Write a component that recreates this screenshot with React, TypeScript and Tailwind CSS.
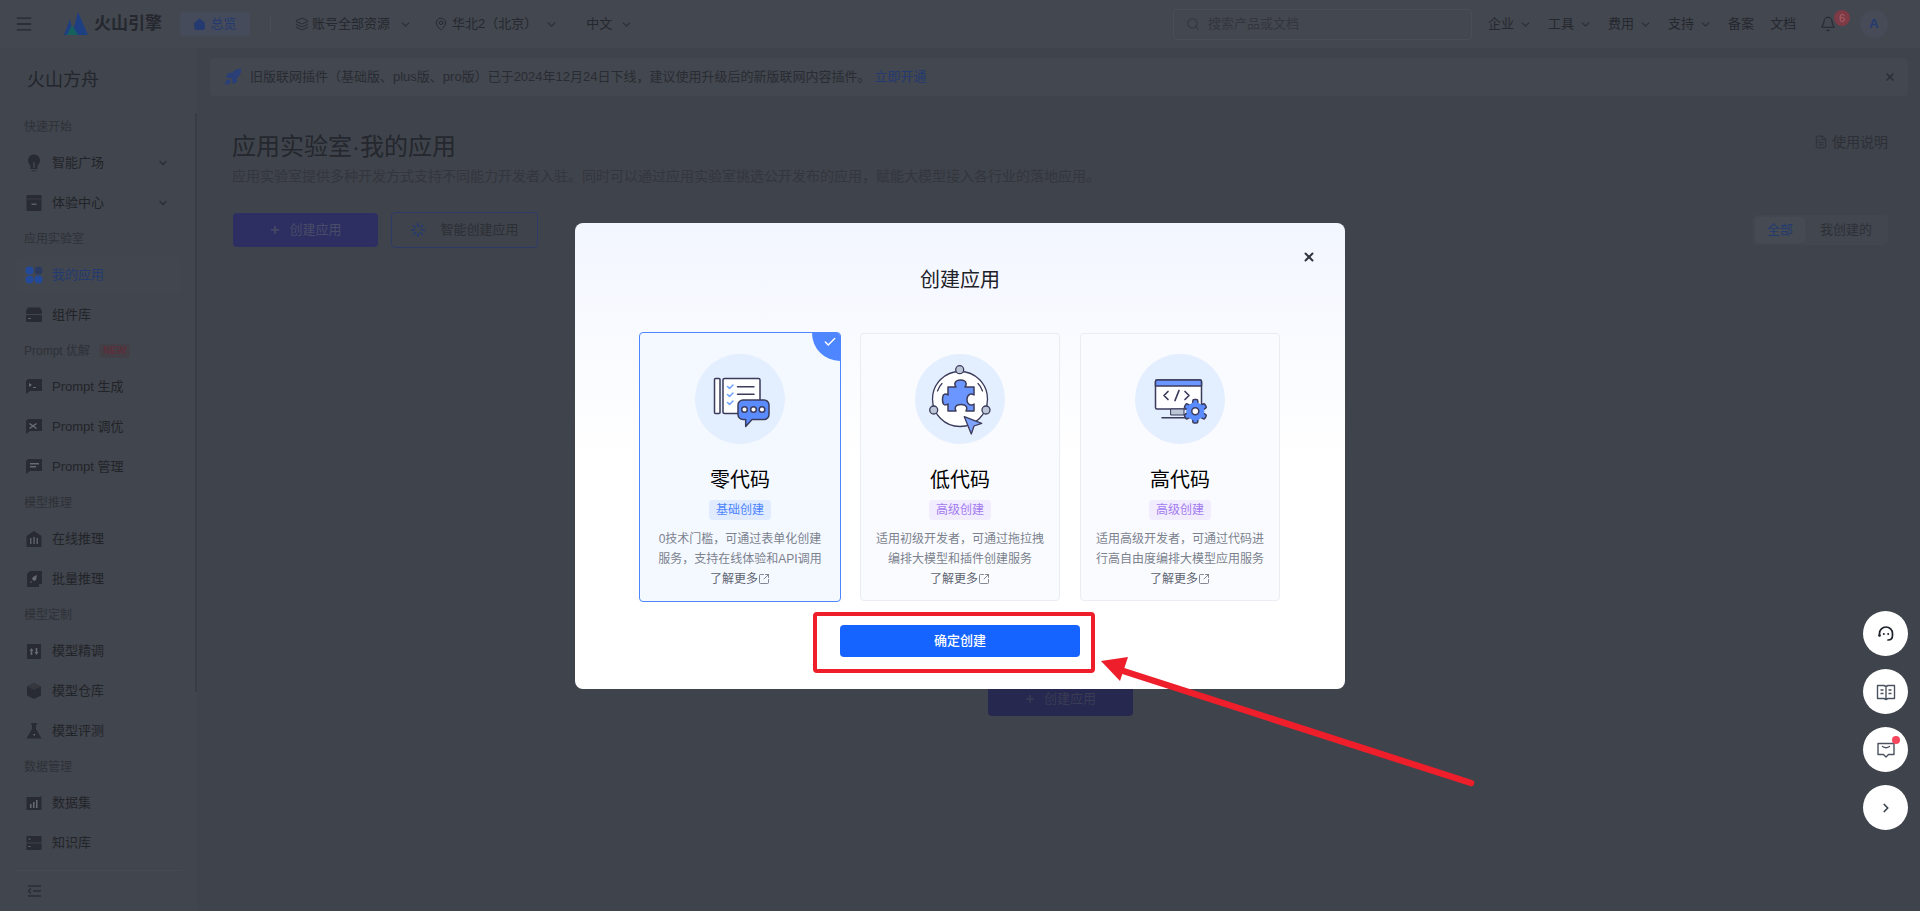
import {
  Bell,
  Check,
  ChevronDown,
  ChevronRight,
  FileText,
  House,
  Layers,
  MapPin,
  Menu,
  Plus,
  Rocket,
  Search,
  SquareArrowOutUpRight,
  X,
} from "lucide-react"
import type { ReactNode } from "react"

const fontStack = { fontFamily: '"Liberation Sans", "Noto Sans CJK SC", sans-serif' }

const Glyph = ({ children, color = "#282b33" }: { children: ReactNode; color?: string }) => (
  <svg width="20" height="20" viewBox="0 0 20 20" fill={color}>
    {children}
  </svg>
)

const sideIcons: Record<string, ReactNode> = {
  bulb: (
    <Glyph>
      <path d="M10 1.500c-3.600 0-6 2.700-6 6 0 2.400 1.200 3.900 2.500 5.200V16h7v-3.300C14.800 11.400 16 9.900 16 7.500c0-3.300-2.400-6-6-6z" />
      <path d="M9.200 9h1.600v6H9.200z" fill="#41454d" />
      <path d="M7.500 17h5v1.500h-5z" fill="#33363d" />
    </Glyph>
  ),
  box: (
    <Glyph>
      <rect x="2.500" y="2" width="15" height="16" rx="1" />
      <path d="M7.500 10.500h5V12h-5z" fill="#5a5e66" />
      <path d="M2.500 5.500h15v1h-15z" fill="#3a3d45" />
    </Glyph>
  ),
  apps: (
    <Glyph color="#234a9a">
      <circle cx="5.500" cy="5.500" r="4" />
      <circle cx="14.500" cy="5.500" r="4" fill="#2b3a60" />
      <circle cx="5.500" cy="14.500" r="4" />
      <circle cx="14.500" cy="14.500" r="4" />
    </Glyph>
  ),
  stack: (
    <Glyph>
      <path d="M4 2.500h12l2 3.500v3H2V6z" />
      <rect x="2" y="10" width="16" height="7" rx="1" />
      <path d="M4 13h3v1H4z" fill="#5a5e66" />
    </Glyph>
  ),
  term: (
    <Glyph>
      <path d="M4 2h14v12H6l-4 3V4z" />
      <path d="M5 6l3 2-3 2zM9 10h3v1H9z" fill="#666a72" />
    </Glyph>
  ),
  tune: (
    <Glyph>
      <path d="M4 2h14v12H6l-4 3V4z" />
      <path d="M6 6l7 5-1 1-7-5zM12 6l1 1-7 5-1-1z" fill="#666a72" />
    </Glyph>
  ),
  lines: (
    <Glyph>
      <path d="M4 2h14v12H6l-4 3V4z" />
      <path d="M6 6h9v1.500H6zM6 9h6v1.500H6z" fill="#666a72" />
    </Glyph>
  ),
  bank: (
    <Glyph>
      <path d="M2.500 7L10 2l7.500 5v11h-15z" />
      <path d="M6 9h1.500v6H6zM9.300 8h1.500v7H9.300zM12.500 9H14v6h-1.500z" fill="#5a5e66" />
    </Glyph>
  ),
  batch: (
    <Glyph>
      <path d="M6 2h12v13h-3v3H3V5l3-3z" />
      <path d="M13 6l-1 5-2 1-2-2 1-2zM7 12l1 1-2 1z" fill="#666a72" />
    </Glyph>
  ),
  updown: (
    <Glyph>
      <rect x="3" y="3" width="14" height="15" />
      <path d="M7.500 7l2 3H8.300v4H6.700v-4H5.500zM12.500 14l-2-3h1.200V7h1.600v4h1.200z" fill="#666a72" />
    </Glyph>
  ),
  cube: (
    <Glyph>
      <path d="M10 2l7 3.500v9L10 18l-7-3.500v-9z" />
      <path d="M10 2l7 3.500L10 9 3 5.500z" fill="#34373e" />
    </Glyph>
  ),
  flask: (
    <Glyph>
      <path d="M7 2h6v1.500h-1V8l5.500 9.500H2.500L8 8V3.500H7z" />
      <rect x="9.500" y="13" width="1.500" height="1.500" fill="#666a72" />
    </Glyph>
  ),
  bars: (
    <Glyph>
      <path d="M2.500 4h13l2-1v14H2.500z" />
      <path d="M6 11h1.500v4H6zM9 9h1.500v6H9zM12 7h1.500v8H12z" fill="#666a72" />
    </Glyph>
  ),
  server: (
    <Glyph>
      <rect x="2.500" y="3" width="15" height="6.500" />
      <rect x="2.500" y="10.500" width="15" height="6.500" />
      <path d="M4.500 5.500h2v1h-2zM4.500 13h2v1h-2z" fill="#666a72" />
    </Glyph>
  ),
}

type NavEntry =
  | { title: string; badge?: string }
  | { label: string; icon: string; caret?: boolean; active?: boolean }

const navEntries: NavEntry[] = [
  { title: "快速开始" },
  { label: "智能广场", icon: "bulb", caret: true },
  { label: "体验中心", icon: "box", caret: true },
  { title: "应用实验室" },
  { label: "我的应用", icon: "apps", active: true },
  { label: "组件库", icon: "stack" },
  { title: "Prompt 优解", badge: "NEW" },
  { label: "Prompt 生成", icon: "term" },
  { label: "Prompt 调优", icon: "tune" },
  { label: "Prompt 管理", icon: "lines" },
  { title: "模型推理" },
  { label: "在线推理", icon: "bank" },
  { label: "批量推理", icon: "batch" },
  { title: "模型定制" },
  { label: "模型精调", icon: "updown" },
  { label: "模型仓库", icon: "cube" },
  { label: "模型评测", icon: "flask" },
  { title: "数据管理" },
  { label: "数据集", icon: "bars" },
  { label: "知识库", icon: "server" },
]

const Sidebar = () => (
  <aside className="w-[197px] shrink-0 flex flex-col bg-[#41454d] relative">
    <div className="h-[63px] pl-[27px] pt-[19px] text-[18px] leading-[26px] text-[#23262c]">火山方舟</div>
    <nav>
      {navEntries.map((entry) =>
        "title" in entry ? (
          <div key={entry.title} className="h-8 pl-6 flex items-center text-xs text-[#2e3138]">
            {entry.title}
            {entry.badge && (
              <span className="ml-[9px] px-1 rounded-sm bg-[#433f47] text-[10px] font-bold text-[#5c2f3a]">
                {entry.badge}
              </span>
            )}
          </div>
        ) : (
          <div key={entry.label} className="h-10 py-0.5 mx-4">
            <div
              className={`h-9 pl-2 pr-3 rounded flex items-center text-[13px] ${
                entry.active ? "bg-[#42474f] text-[#243a70]" : "text-[#212429]"
              }`}
            >
              <span className="w-5 mr-2 flex justify-center">{sideIcons[entry.icon]}</span>
              {entry.label}
              {entry.caret && <ChevronDown size={12} strokeWidth={2.5} className="ml-auto text-[#2a2d33]" />}
            </div>
          </div>
        )
      )}
    </nav>
    <div className="mt-[7px] mx-[14px] border-t border-[#464a52] pt-[12px] pl-[12px]">
      <svg width="16" height="16" viewBox="0 0 16 16" fill="none" stroke="#2a2d33" strokeWidth="1.400">
        <path d="M2 3h13M7 8h8M2 13h13M5 5.500L2.500 8 5 10.500" />
      </svg>
    </div>
    <div className="absolute right-0 top-[65px] h-[579px] w-0.5 bg-[#393c44]" />
  </aside>
)

const Caret = () => <ChevronDown size={13} strokeWidth={2.2} className="text-[#2c2f36]" />

const TopNavItem = ({ label }: { label: string }) => (
  <div className="w-[60px] flex items-center gap-[5px]">
    {label}
    <Caret />
  </div>
)

const Header = () => (
  <header className="h-12 shrink-0 flex items-center bg-[#43474f] text-[13px] text-[#25282e]">
    <Menu size={20} strokeWidth={1.600} className="ml-[14px] text-[#25282e]" />
    <svg className="ml-[30px]" width="24" height="26" viewBox="0 0 24 26">
      <path d="M0 24L6 8l3 16z" fill="#1f3f83" />
      <path d="M8 24L14 1l10 23z" fill="#1f3f83" />
      <path d="M3 24l5-10 6 10z" fill="#15615e" />
    </svg>
    <span className="ml-1.5 text-[17px] font-bold text-[#25282e]">火山引擎</span>
    <div className="ml-[18px] w-[70px] h-6 rounded bg-[#454b5a] flex items-center justify-center gap-1 text-[#243a70]">
      <House size={13} fill="#243a70" strokeWidth={1.500} />
      总览
    </div>
    <div className="ml-5 w-px h-4 bg-[#484c54]" />
    <div className="ml-[24px] flex items-center gap-[3px]">
      <Layers size={14} strokeWidth={1.600} />
      账号全部资源
      <span className="ml-1.5">
        <Caret />
      </span>
    </div>
    <div className="ml-[22px] flex items-center gap-1">
      <MapPin size={14} strokeWidth={1.600} />
      华北2（北京）
      <span className="ml-1">
        <Caret />
      </span>
    </div>
    <div className="ml-[28px] flex items-center gap-2">
      中文
      <Caret />
    </div>
    <div className="ml-auto flex items-center pr-8">
      <div className="w-[299px] h-[31px] rounded border border-[#4a4e56] flex items-center pl-[12px] gap-2 text-[#33363d]">
        <Search size={14} strokeWidth={1.800} />
        搜索产品或文档
      </div>
      <div className="ml-4 flex items-center">
        <TopNavItem label="企业" />
        <TopNavItem label="工具" />
        <TopNavItem label="费用" />
        <TopNavItem label="支持" />
        <span className="w-[42px]">备案</span>
        <span className="w-[26px]">文档</span>
      </div>
      <div className="relative ml-6">
        <Bell size={16} strokeWidth={1.600} />
        <span className="absolute -top-[6px] left-[14px] w-4 h-4 rounded-full bg-[#7e3a45] text-[11px] leading-4 text-center text-[#a9606a]">
          6
        </span>
      </div>
      <div className="ml-6 w-7 h-7 rounded-full bg-[#464b57] flex items-center justify-center font-bold text-[#243a70]">
        A
      </div>
    </div>
  </header>
)

const MainContent = () => (
  <main className="flex-1 min-w-0 flex flex-col bg-[#3f434b]">
    <div className="mt-2.5 ml-[13px] mr-3 h-[38px] rounded bg-[#43474f] flex items-center pl-3.5 pr-3 text-[13px] text-[#292c32]">
      <Rocket size={18} fill="#2b3f78" stroke="#2b3f78" />
      <span className="ml-[8px]">
        旧版联网插件（基础版、plus版、pro版）已于2024年12月24日下线，建议使用升级后的新版联网内容插件。
      </span>
      <span className="ml-1 text-[#243a70]">立即开通</span>
      <X size={12} strokeWidth={3} className="ml-auto text-[#2b2e35]" />
    </div>
    <div className="pl-[35px] pr-8 pt-[35px] flex flex-col">
      <div className="flex items-start justify-between">
        <h1 className="text-2xl leading-8 text-[#24272d]">应用实验室·我的应用</h1>
        <div className="flex items-center gap-1 text-sm text-[#2d3036] h-[22px]">
          <FileText size={14} strokeWidth={1.600} />
          使用说明
        </div>
      </div>
      <p className="mt-0.5 text-sm leading-[22px] text-[#33363d]">
        应用实验室提供多种开发方式支持不同能力开发者入驻。同时可以通过应用实验室挑选公开发布的应用，赋能大模型接入各行业的落地应用。
      </p>
      <div className="mt-[25px] pl-px flex items-center">
        <button className="w-[145px] h-[34px] rounded bg-[#2d2f63] flex items-center justify-center gap-2 text-[13px] text-[#484c66]">
          <Plus size={12} strokeWidth={3} />
          创建应用
        </button>
        <button className="ml-[13px] w-[147px] h-9 rounded border border-[#2d3a68] flex items-center justify-center gap-3.5 text-[13px] text-[#2c2f36]">
          <svg width="16" height="16" viewBox="0 0 16 16" fill="none" stroke="#243a70" strokeWidth="1.600" strokeLinecap="round">
            <path d="M8 1.500v3M8 11.500v3M1.500 8h3M11.500 8h3M3.500 3.500l2 2M10.500 10.500l2 2M12.500 3.500l-2 2M5.500 10.500l-2 2" />
          </svg>
          智能创建应用
        </button>
        <div className="ml-auto w-[135px] h-[30px] rounded bg-[#42464e] flex items-center p-0.5 text-[13px]">
          <span className="w-[50px] h-[26px] rounded-sm bg-[#464a52] flex items-center justify-center text-[#233a6e]">
            全部
          </span>
          <span className="ml-[15px] text-[#2d3036]">我创建的</span>
        </div>
      </div>
      <button className="mx-auto mt-[434px] w-[145px] h-[34px] rounded bg-[#262850] flex items-center justify-center gap-2 text-[13px] text-[#3a3c54]">
        <Plus size={12} strokeWidth={3} />
        创建应用
      </button>
    </div>
  </main>
)

const ink = "#3b3b5c"

const NoCodeArt = () => (
  <svg viewBox="0 0 90 90" className="w-full h-full" fill="none" stroke={ink} strokeWidth="1.500" strokeLinejoin="round" strokeLinecap="round">
    <rect x="19.500" y="24.500" width="5.500" height="35" rx="1" fill="#fff" />
    <rect x="28" y="24.500" width="37" height="35" rx="1.500" fill="#fff" />
    <path d="M32.500 32.500l2 2 3.500-3.500M32.500 40.500l2 2 3.500-3.500M32.500 48.500l2 2 3.500-3.500" stroke="#6ea0ff" />
    <path d="M42.500 32.700H59M42.500 40.300H59" />
    <path d="M48 46h21a5 5 0 0 1 5 5v9.500a5 5 0 0 1-5 5H57l-6.300 7v-7H48a5 5 0 0 1-5-5V51a5 5 0 0 1 5-5z" fill="#5b8cff" />
    <circle cx="49.500" cy="55.500" r="2.800" fill="#fff" />
    <circle cx="58.500" cy="55.500" r="2.800" fill="#fff" />
    <circle cx="67" cy="55.500" r="2.800" fill="#fff" />
  </svg>
)

const LowCodeArt = () => (
  <svg viewBox="0 0 90 90" className="w-full h-full" fill="none" stroke={ink} strokeWidth="1.300" strokeLinejoin="round" strokeLinecap="round">
    <circle cx="45" cy="45" r="27.500" fill="#fff" />
    <path d="M22.500 37c1-3 2.500-5.500 4.500-7.500M67.500 37c-1-3-2.500-5.500-4.500-7.500" />
    <circle cx="44.700" cy="15.700" r="4" fill="#bcc6d6" />
    <circle cx="18.700" cy="56" r="4" fill="#bcc6d6" />
    <circle cx="71" cy="56" r="4" fill="#bcc6d6" />
    <path
      d="M33 33H41c-1-1.500-1.500-2.500-1-4 .7-2 3-3 5.500-3s5 1 5.500 3c.5 1.500 0 2.500-1 4H59V41c-1.500-1-3-1.300-4-.8-2 .8-3 3-3 5.300s1 4.500 3 5.300c1 .5 2.500.2 4-.8V57H51c.8-1.500 1-2.800.5-4-.7-1.600-3.300-2.500-5.500-2.500s-4.800.9-5.500 2.500c-.5 1.200-.3 2.500.5 4H33V50c-1.500 1-3 1.200-4 .5-1.200-.9-1.500-2.800-1.500-5s.3-4.100 1.500-5c1-.7 2.500-.5 4 .5z"
      fill="#6c96ff"
      strokeWidth="1.500"
    />
    <path d="M49.300 62.700L66.700 69.300 59 72 56.300 80z" fill="#7fa4ff" />
  </svg>
)

const HighCodeArt = () => (
  <svg viewBox="0 0 90 90" className="w-full h-full" fill="none" stroke={ink} strokeWidth="1.500" strokeLinejoin="round" strokeLinecap="round">
    <rect x="20.500" y="26" width="46" height="29" rx="1.500" fill="#fff" />
    <path d="M20.500 27.500a1.500 1.500 0 0 1 1.500-1.500h43a1.500 1.500 0 0 1 1.500 1.500V32h-46z" fill="#6c96ff" />
    <path d="M33 37.500l-4 4 4 4M40 46.500l4-10M50 37.500l4 4-4 4" strokeWidth="1.700" />
    <path d="M36 55h13v6H36z" fill="#bcc6d6" strokeWidth="1" />
    <path d="M27 63.700h25" />
    <g fill="#5b8cff">
      <rect x="57.800" y="45.500" width="5" height="23.500" rx="1.500" />
      <rect x="57.800" y="45.500" width="5" height="23.500" rx="1.500" transform="rotate(60 60.300 57.300)" />
      <rect x="57.800" y="45.500" width="5" height="23.500" rx="1.500" transform="rotate(120 60.300 57.300)" />
      <circle cx="60.300" cy="57.300" r="9" stroke="none" />
    </g>
    <circle cx="60.300" cy="57.300" r="3.500" fill="#fff" />
  </svg>
)

interface Plan {
  name: string
  tag: string
  basic?: boolean
  art: ReactNode
  lines: string[]
}

const plans: Plan[] = [
  {
    name: "零代码",
    tag: "基础创建",
    basic: true,
    art: <NoCodeArt />,
    lines: ["0技术门槛，可通过表单化创建", "服务，支持在线体验和API调用"],
  },
  {
    name: "低代码",
    tag: "高级创建",
    art: <LowCodeArt />,
    lines: ["适用初级开发者，可通过拖拉拽", "编排大模型和插件创建服务"],
  },
  {
    name: "高代码",
    tag: "高级创建",
    art: <HighCodeArt />,
    lines: ["适用高级开发者，可通过代码进", "行高自由度编排大模型应用服务"],
  },
]

const PlanCard = ({ plan }: { plan: Plan }) => (
  <div
    className={`relative overflow-hidden rounded border flex flex-col items-center ${
      plan.basic ? "-m-px pt-[21px] border-[#4d86ff] bg-[#f4f8ff]" : "pt-5 border-[#e9edf3] bg-[#fafbfe]"
    }`}
  >
    {plan.basic && (
      <div className="absolute -top-7 -right-7 w-14 h-14 rounded-full bg-[#4d86ff]">
        <Check size={14} strokeWidth={2.5} className="absolute left-[11px] top-[30px] text-white" />
      </div>
    )}
    <div className="w-[90px] h-[90px] rounded-full bg-[#e3eeff]">{plan.art}</div>
    <div className="mt-[22px] text-xl leading-7 text-black">{plan.name}</div>
    <div
      className={`mt-1.5 w-[62px] h-5 rounded text-xs leading-5 text-center ${
        plan.basic ? "bg-[#e0ebff] text-[#4d85ff]" : "bg-[#f2ecff] text-[#a27bf0]"
      }`}
    >
      {plan.tag}
    </div>
    <div className="mt-[9px] text-xs leading-5 text-center text-[#7b828e] whitespace-nowrap">
      {plan.lines.map((line) => (
        <div key={line}>{line}</div>
      ))}
      <div className="flex items-center justify-center text-[#5c6370]">
        了解更多
        <SquareArrowOutUpRight size={12} strokeWidth={1.500} />
      </div>
    </div>
  </div>
)

const CreateDialog = () => (
  <div className="absolute inset-0 backdrop-blur-[0.5px] flex justify-center pt-[223px]">
    <div className="relative w-[770px] h-[466px] rounded-lg bg-gradient-to-b from-[#f2f6ff] to-white to-50% flex flex-col items-center pt-[43px]">
      <X size={14} strokeWidth={3.500} className="absolute top-[27px] right-[29px] text-[#33363d]" />
      <h2 className="text-xl leading-7 text-[#1d2129]">创建应用</h2>
      <div className="mt-[39px] grid grid-cols-3 gap-5 w-[640px] h-[268px]">
        {plans.map((plan) => (
          <PlanCard key={plan.name} plan={plan} />
        ))}
      </div>
      <button className="mt-6 w-[240px] h-8 rounded bg-[#1664ff] text-[13px] font-medium text-white">确定创建</button>
    </div>
  </div>
)

// red markup drawn over the screenshot
const Annotation = () => (
  <>
    <div className="absolute left-[813px] top-[612px] w-[282px] h-[61px] border-4 border-[#ee1f2b] rounded-sm" />
    <svg className="absolute inset-0 pointer-events-none" width="1920" height="911">
      <path d="M1114 668L1471 783" fill="none" stroke="#ee1f2b" strokeWidth="6.500" strokeLinecap="round" />
      <path d="M1101 661L1128 657 1120 681z" fill="#ee1f2b" />
    </svg>
  </>
)

const FloatButton = ({ children }: { children: ReactNode }) => (
  <div className="relative w-[45px] h-[45px] rounded-full bg-white flex items-center justify-center text-[#3d4450]">
    {children}
  </div>
)

const FloatRail = () => (
  <div className="absolute right-[12px] top-[611px] flex flex-col gap-[13px]">
    <FloatButton>
      <svg width="20" height="20" viewBox="0 0 20 20" fill="none" stroke="#1d2129" strokeWidth="1.700" strokeLinecap="round">
        <path d="M3.500 11.500V9.500a6.500 6.500 0 0 1 13 0v2c0 2.800-2 4.500-4.500 4.500" />
        <circle cx="3.500" cy="11.500" r="1.300" fill="#1d2129" stroke="none" />
        <circle cx="7.800" cy="10" r="1" fill="#1d2129" stroke="none" />
        <circle cx="12.200" cy="10" r="1" fill="#1d2129" stroke="none" />
      </svg>
    </FloatButton>
    <FloatButton>
      <svg width="20" height="20" viewBox="0 0 20 20" fill="none" stroke="#4b5360" strokeWidth="1.400" strokeLinejoin="round">
        <path d="M1.500 3.500h6.500l2 1 2-1h6.500v13H12l-2 1-2-1H1.500zM10 4.500v13" />
        <path d="M4.500 8h3M4.500 11.500h3M12.500 8h3M12.500 11.500h3" />
      </svg>
    </FloatButton>
    <FloatButton>
      <svg width="20" height="20" viewBox="0 0 20 20" fill="none" stroke="#4b5360" strokeWidth="1.400" strokeLinejoin="round">
        <path d="M2 3.500h16v11h-5.500L10 17l-2.500-2.500H2z" />
        <path d="M6.500 6.500c2.300 1.700 4.700 1.700 7 0" strokeLinecap="round" />
      </svg>
      <span className="absolute top-[9px] right-[8px] w-2 h-2 rounded-full bg-[#f5475d]" />
    </FloatButton>
    <FloatButton>
      <ChevronRight size={14} strokeWidth={3} />
    </FloatButton>
  </div>
)

export default function App() {
  return (
    <div className="relative w-full h-[911px] overflow-hidden flex flex-col bg-[#3f434b]" style={fontStack}>
      <Header />
      <div className="flex-1 flex min-h-0">
        <Sidebar />
        <MainContent />
      </div>
      <CreateDialog />
      <Annotation />
      <FloatRail />
    </div>
  )
}
